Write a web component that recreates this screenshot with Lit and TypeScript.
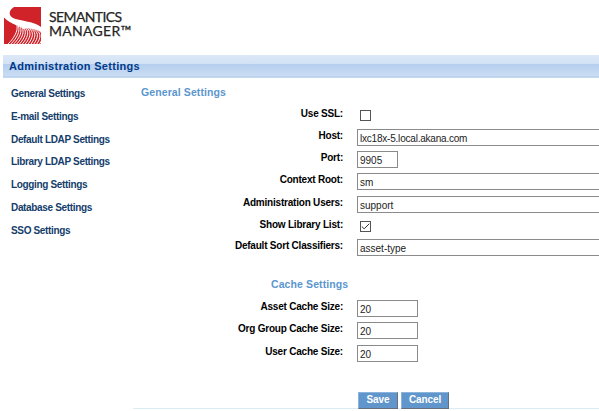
import { LitElement, html, svg, css, nothing } from "lit";
import { customElement, property } from "lit/decorators.js";
import { classMap } from "lit/directives/class-map.js";

interface Field {
  label: string;
  kind: "check" | "full" | "port" | "small";
  value?: string;
  checked?: boolean;
  row: number;
}

const NAV = [
  "General Settings",
  "E-mail Settings",
  "Default LDAP Settings",
  "Library LDAP Settings",
  "Logging Settings",
  "Database Settings",
  "SSO Settings",
];

const GENERAL: Field[] = [
  { label: "Use SSL:", kind: "check", checked: false, row: 22 },
  { label: "Host:", kind: "full", value: "lxc18x-5.local.akana.com", row: 22 },
  { label: "Port:", kind: "port", value: "9905", row: 22 },
  { label: "Context Root:", kind: "full", value: "sm", row: 23 },
  { label: "Administration Users:", kind: "full", value: "support", row: 22 },
  { label: "Show Library List:", kind: "check", checked: true, row: 21 },
  { label: "Default Sort Classifiers:", kind: "full", value: "asset-type", row: 22 },
];

const CACHE: Field[] = [
  { label: "Asset Cache Size:", kind: "small", value: "20", row: 22 },
  { label: "Org Group Cache Size:", kind: "small", value: "20", row: 23 },
  { label: "User Cache Size:", kind: "small", value: "20", row: 22 },
];

@customElement("brand-logo")
export class BrandLogo extends LitElement {
  static styles = css`
    :host { display: flex; height: 55px; }
    .mark { display: block; margin: 6.5px 0 0 3.5px; flex: none; }
    .words { margin: 10px 0 0 8.5px; font: 400 14px/14px Lato, sans-serif; color: #242424; -webkit-text-stroke: 0.25px #242424; white-space: nowrap; }
    .first { display: block; letter-spacing: -0.6px; }
    .second { display: block; letter-spacing: 0.3px; }
  `;

  render() {
    const waves = Array.from({ length: 12 }, (_, i) => {
      const t = i * 2.9;
      return svg`<path d="M11 ${16 + i * 0.1} C${15 + t * 0.75} ${18 + i * 0.2} ${14 + t * 0.9} ${28 - i * 0.1} ${3 + t} 38" />`;
    });
    return html`
      <svg class="mark" width="37" height="37" viewBox="0 0 37 37">
        <path fill="#cf2229" d="M0 0H37V37H0z" />
        <g fill="none" stroke="#fff" stroke-width="1">${waves}</g>
        <path fill="#fff" d="M0 0H10C5 3 4 8 9 11C15 14 30 14 37 20V25C32 21 24 20.5 19 22C18 20 15 19 12 18C7 16 3 14 0 10.5z" />
      </svg>
      <div class="words"><span class="first">SEMANTICS</span><span class="second">MANAGER™</span></div>
    `;
  }
}

@customElement("field-row")
export class FieldRow extends LitElement {
  @property({ attribute: false }) field!: Field;

  static styles = css`
    :host { display: block; }
    .row { display: grid; grid-template-columns: 210px 1fr; column-gap: 14px; align-items: start; }
    .label { text-align: right; font: bold 10px/14px "Liberation Sans", sans-serif; letter-spacing: -0.21px; color: #000; white-space: nowrap; }
    .input { box-sizing: border-box; height: 17px; border: 1px solid #8a8a8a; padding: 1px 0 0 2px; font: 10px/15px "Liberation Sans", sans-serif; color: #222; background: #fff; white-space: nowrap; }
    .full { border-right: 0; }
    .long { letter-spacing: -0.21px; }
    .port { width: 41px; }
    .small { width: 61px; }
    .box { box-sizing: border-box; display: block; width: 11px; height: 11px; border: 1px solid #555; margin: 3px 0 0 3px; }
    .tick { display: block; }
  `;

  render() {
    const f = this.field;
    const long = (f.value ?? "").length > 12;
    return html`<div class="row">
      <span class="label">${f.label}</span>
      ${f.kind === "check"
        ? html`<span class="box">${f.checked
            ? html`<svg class="tick" width="9" height="9" viewBox="0 0 9 9"><path d="M.8 4.5 3.2 6.8 8.3 1.7" fill="none" stroke="#333" stroke-width="1" /></svg>`
            : nothing}</span>`
        : html`<div class=${classMap({ input: true, [f.kind]: true, long })}>${f.value}</div>`}
    </div>`;
  }
}

@customElement("app-root")
export class AppRoot extends LitElement {
  static styles = css`
    :host { display: block; width: 599px; height: 411px; overflow: hidden; background: #fff; font-family: "Liberation Sans", sans-serif; }
    .bar { box-sizing: border-box; height: 23px; margin-left: 3px; padding-left: 6px; font: bold 11px/22px "Liberation Sans", sans-serif; letter-spacing: 0.3px; color: #003a8a; white-space: nowrap;
      background: linear-gradient(#dce8f7 0, #d2e2f5 9px, #b5ceee 9px, #c9dcf3 21px, #b8d0ee 21px, #c5daf4 23px); }
    .body { display: flex; height: 331px; }
    .nav { box-sizing: border-box; width: 133px; padding: 5px 0 0 11px; flex: none; }
    .link { display: block; height: 22.75px; font: bold 10px/22px "Liberation Sans", sans-serif; letter-spacing: -0.34px; color: #143d6b; white-space: nowrap; }
    .main { flex: 1; min-width: 0; border-bottom: 1px solid #dcecf5; }
    .title { font: bold 10.5px/14px "Liberation Sans", sans-serif; letter-spacing: 0.1px; color: #5b96ce; white-space: nowrap; }
    .general { margin: 7px 0 8px 8px; }
    .cache { margin: 16px 0 9px 138px; }
    .buttons { display: flex; gap: 3px; margin: 25px 0 0 225px; }
    .button { box-sizing: border-box; height: 17px; border: 1px solid; border-color: #8ab4dc #666f7a #666f7a #8ab4dc; background: #6096cc; color: #fff; font: bold 10px/14px "Liberation Sans", sans-serif; text-align: center; letter-spacing: -0.1px; }
    .save { width: 40px; }
    .cancel { width: 48px; }
  `;

  private rows(fields: Field[]) {
    return fields.map((f) => html`<field-row .field=${f} style="height:${f.row}px"></field-row>`);
  }

  render() {
    return html`
      <brand-logo></brand-logo>
      <div class="bar">Administration Settings</div>
      <div class="body">
        <div class="nav">${NAV.map((n) => html`<span class="link">${n}</span>`)}</div>
        <div class="main">
          <div class="title general">General Settings</div>
          ${this.rows(GENERAL)}
          <div class="title cache">Cache Settings</div>
          ${this.rows(CACHE)}
          <div class="buttons">
            <div class="button save">Save</div>
            <div class="button cancel">Cancel</div>
          </div>
        </div>
      </div>
    `;
  }
}
